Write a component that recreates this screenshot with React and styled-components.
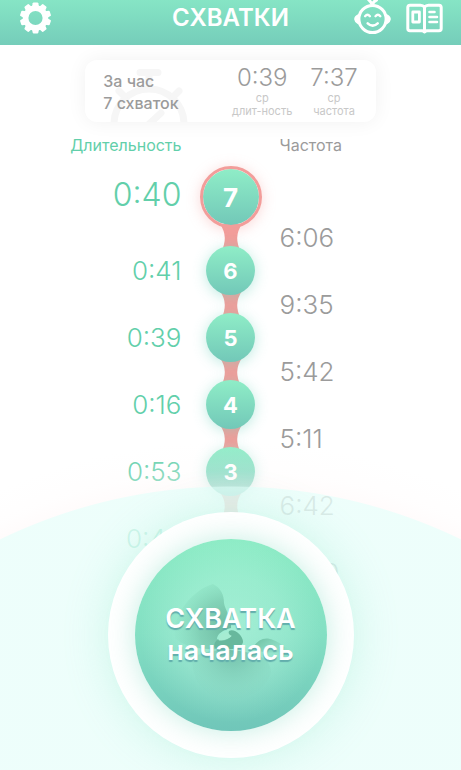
import styled, { createGlobalStyle } from "styled-components"

const GlobalStyle = createGlobalStyle`
  * {
    box-sizing: border-box;
  }
  body {
    margin: 0;
    background: #fff;
    font-family: Inter, "Liberation Sans", sans-serif;
  }
`
const Page = styled.div`
  position: relative;
  display: flex;
  flex-direction: column;

  height: 100vh;
  overflow: hidden;
`
const Header = styled.header`
  flex: none;
  display: grid;
  grid-template-columns: 1fr auto 1fr;
  align-items: center;

  padding: 0 17px 10px;
  background: linear-gradient(#86e5c5, #75cdba);

  h1 {
    margin: 0;
    color: #fff;
    font-size: 24px;
    font-weight: 600;
    line-height: 35px;
  }
`
const HeaderActions = styled.div`
  display: flex;
  justify-content: flex-end;
  gap: 14px;
`
const IconButton = styled.button`
  display: flex;
  justify-self: start;

  padding: 0;
  border: none;
  background: none;
  color: #fff;
  cursor: pointer;
`
const Summary = styled.section`
  position: relative;
  flex: none;
  align-self: center;
  display: flex;
  align-items: center;
  gap: 18px;

  width: 63%;
  min-width: 290px;
  height: 62px;
  margin-top: 15px;
  padding: 0 18px;
  overflow: hidden;

  border-radius: 12px;
  background: #fff;
  box-shadow: 0 0 20px rgba(0, 0, 0, 0.06);
`
const Watermark = styled.svg`
  position: absolute;
  top: 0;
  left: 22px;
`
const SummaryText = styled.p`
  position: relative;
  flex: 1;
  margin: 2px 0 0;

  color: #9b9b9b;
  font-size: 16px;
  font-weight: 500;
  line-height: 22px;
`
const Average = styled.div`
  display: flex;
  flex-direction: column;
  align-items: center;

  color: #c8c8c8;
  font-size: 11px;
  line-height: 13px;

  strong {
    color: #9b9b9b;
    font-size: 24px;
    font-weight: 300;
    line-height: 28px;
  }
`
const columns = `
  display: grid;
  grid-template-columns: 1fr 62px 1fr;
  column-gap: 18px;
`
const ListHead = styled.div`
  ${columns}
  flex: none;
  margin: 12px 0 10px;

  color: #9b9b9b;
  font-size: 16px;
  line-height: 22px;

  span:first-child {
    color: #62cfaa;
    text-align: right;
  }
  span:last-child {
    grid-column: 3;
  }
`
const List = styled.ol`
  flex: 1;
  min-height: 0;
  margin: 0;
  padding: 0;
  list-style: none;
`
const Row = styled.li`
  ${columns}
  grid-template-rows: 100%;
  height: ${({ $latest }) => ($latest ? "80px" : "67px")};
`
const Duration = styled.span`
  color: #62cfaa;
  text-align: right;
  font-size: ${({ $latest }) => ($latest ? "32px" : "26px")};
  font-weight: 300;
  line-height: ${({ $latest }) => ($latest ? "57px" : "49px")};
`
const Interval = styled.span`
  align-self: end;
  margin-bottom: -8px;

  color: #9b9b9b;
  font-size: 26px;
  font-weight: 300;
  line-height: 32px;
`
const Track = styled.div`
  display: flex;
  flex-direction: column;
  align-items: center;
`
const Bubble = styled.span`
  z-index: 1;
  flex: none;
  display: flex;
  align-items: center;
  justify-content: center;

  width: ${({ $latest }) => ($latest ? "62px" : "49px")};
  height: ${({ $latest }) => ($latest ? "62px" : "49px")};
  border: ${({ $latest }) => ($latest ? "3px solid #f29d9a" : "none")};
  border-radius: 50%;
  background: linear-gradient(#8fedc7, #72c8b8) padding-box;
  box-shadow: 0 2px 14px
    ${({ $latest }) =>
      $latest ? "rgba(242, 157, 154, 0.4)" : "rgba(114, 210, 190, 0.45)"};

  color: #fff;
  font-size: ${({ $latest }) => ($latest ? "26px" : "22px")};
  font-weight: 700;
`
const Connector = styled.svg`
  flex: none;
  margin-top: -4px;
`
const Dock = styled.div`
  position: absolute;
  z-index: 2;
  right: 0;
  bottom: 0;
  left: 0;
  display: flex;
  align-items: flex-end;
  justify-content: center;

  height: 353px;
  padding-bottom: 12px;
  background: radial-gradient(
    circle at 50% 598px,
    rgba(233, 254, 250, 0.8) 528px,
    rgba(255, 248, 248, 0.5) 529px,
    rgba(255, 250, 250, 0.25) 544px,
    rgba(255, 255, 255, 0) 574px
  );
  pointer-events: none;
`
const StartButton = styled.button`
  display: flex;
  align-items: center;
  justify-content: center;

  width: 246px;
  height: 246px;
  padding: 27px;
  border: none;
  border-radius: 50%;
  background: #fff;
  box-shadow: 0 0 44px rgba(130, 225, 195, 0.3);

  cursor: pointer;
  pointer-events: auto;
`
const StartFace = styled.span`
  display: grid;
  place-items: center;

  width: 100%;
  height: 100%;
  border-radius: 50%;
  background: radial-gradient(
      circle at 50% 48%,
      rgba(190, 250, 228, 0.55),
      rgba(190, 250, 228, 0.3) 40%,
      rgba(190, 250, 228, 0) 66%
    ),
    linear-gradient(#8eecc6, #83dfc3 50%, #70c6b9);
  box-shadow: 0 0 28px rgba(110, 215, 185, 0.4);

  > * {
    grid-area: 1 / 1;
  }
`
const StartLabel = styled.span`
  z-index: 1;

  color: #fff;
  font-family: Inter, "Liberation Sans", sans-serif;
  font-size: 27px;
  font-weight: 600;
  line-height: 32px;
  text-shadow: 0 2px 1px #62aeac;
`

const GearIcon = () => (
  <svg width='37' height='33' viewBox='0 0 37 33' aria-hidden='true'>
    <g transform='translate(18.5 17)' fill='currentColor'>
      {Array.from({ length: 10 }, (_, i) => (
        <path
          key={i}
          d='M-3.6 -11 L-2.8 -14.8 Q-2.6 -15.6 -1.8 -15.6 H1.8 Q2.6 -15.6 2.8 -14.8 L3.6 -11Z'
          transform={`rotate(${i * 36})`}
        />
      ))}
      <circle r='9.9' fill='none' stroke='currentColor' strokeWidth='5.6' />
    </g>
  </svg>
)

const BabyIcon = () => (
  <svg
    width='38'
    height='35'
    viewBox='0 0 38 35'
    fill='none'
    stroke='currentColor'
    strokeLinecap='round'
    aria-hidden='true'
  >
    <circle cx='18.5' cy='19' r='13.6' strokeWidth='3' />
    <path d='M4 15.5 Q1 17 1.2 19.5 Q1.5 22 4 23Z' fill='currentColor' strokeWidth='2' />
    <path d='M33 15.5 Q36 17 35.8 19.5 Q35.5 22 33 23Z' fill='currentColor' strokeWidth='2' />
    <path d='M18.5 5 Q17 2 14 -1 M18.5 5 Q19 1.5 22.5 0' strokeWidth='3' />
    <path d='M11.1 16.2 Q13.5 13.4 15.9 16.2 M21.5 16.2 Q23.9 13.4 26.3 16.2' strokeWidth='2.4' />
    <path d='M13.7 23.4 Q18.7 28 23.7 23.4' strokeWidth='2.6' />
  </svg>
)

const BookIcon = () => (
  <svg
    width='38'
    height='35'
    viewBox='0 0 38 35'
    fill='none'
    stroke='currentColor'
    strokeLinecap='round'
    strokeLinejoin='round'
    aria-hidden='true'
  >
    <path
      d='M18.5 7.2 Q17 5.2 14.5 5.2 H4 Q1.8 5.2 1.8 7.5 V28.5 Q1.8 30.8 4 30.8 H16.5 L18.5 32 L20.5 30.8 H33 Q35.2 30.8 35.2 28.5 V7.5 Q35.2 5.2 33 5.2 H22.5 Q20 5.2 18.5 7.2 V31'
      strokeWidth='3'
    />
    <rect x='6.8' y='12' width='6.6' height='10' strokeWidth='2.8' />
    <path d='M23.5 12 H28.5 M23.5 17 H31 M23.5 22 H31' strokeWidth='2.6' />
  </svg>
)

const Stopwatch = () => (
  <Watermark
    width='84'
    height='62'
    viewBox='0 0 84 62'
    fill='none'
    stroke='#f6f6f6'
    strokeLinecap='round'
    aria-hidden='true'
  >
    <circle cx='42' cy='64' r='35' strokeWidth='7' />
    <path d='M33 12.5 H51 M12 31 L17 36 M72 31 L67 36 M42 64 L54 53' strokeWidth='7' />
    <path d='M42 14 V28' strokeWidth='7' strokeLinecap='butt' />
  </Watermark>
)

const Fetus = () => (
  <svg width='191' height='191' viewBox='0 0 191 191' aria-hidden='true'>
    <defs>
      <radialGradient id='head' gradientUnits='userSpaceOnUse' cx='92' cy='88' r='56'>
        <stop offset='0' stopColor='#4f9c83' stopOpacity='0.65' />
        <stop offset='0.5' stopColor='#5bab90' stopOpacity='0.4' />
        <stop offset='1' stopColor='#6fc9a9' stopOpacity='0' />
      </radialGradient>
      <radialGradient id='body' gradientUnits='userSpaceOnUse' cx='98' cy='108' r='54'>
        <stop offset='0' stopColor='#4f9c88' stopOpacity='0.6' />
        <stop offset='1' stopColor='#7fcdb5' stopOpacity='0' />
      </radialGradient>
      <linearGradient id='foot' x1='0' y1='0.4' x2='1' y2='0.9'>
        <stop offset='0' stopColor='#62b597' stopOpacity='0.7' />
        <stop offset='1' stopColor='#7fcdb5' stopOpacity='0' />
      </linearGradient>
    </defs>
    <path
      d='M78 44 C86 48 89 55 89 63 C90 70 97 78 96 88 C88 90 82 94 82 99 C90 102 95 96 100 94 L108 101 C104 109 84 110 72 109 C56 108 46 104 40 98 C36 78 56 50 78 44Z'
      fill='url(#head)'
    />
    <path
      d='M57 118 C70 110 90 108 110 112 C124 114 136 120 136 132 C132 150 112 160 94 160 C72 158 57 144 57 118Z'
      fill='url(#body)'
    />
    <path d='M118 108 C122 100 130 96 138 100 C145 102 150 108 156 111 C142 113 126 114 118 108Z' fill='url(#foot)' />
    <path d='M84 101 C83 95 89 92 95 92 C99 95 97 99 84 101Z' fill='#a6ecd2' />
    <path
      d='M94 91 C99 88 108 95 108 102 C107 109 94 110 84 110 C78 109 78 104 82 100 C88 102 93 100 97 96 C94 95 93 93 94 91Z'
      fill='#68b89d'
    />
  </svg>
)

const contractions = [
  { number: 7, duration: "0:40", interval: "6:06" },
  { number: 6, duration: "0:41", interval: "9:35" },
  { number: 5, duration: "0:39", interval: "5:42" },
  { number: 4, duration: "0:16", interval: "5:11" },
  { number: 3, duration: "0:53", interval: "6:42" },
  { number: 2, duration: "0:43", interval: "10:10" },
]

const ContractionRow = ({ number, duration, interval, latest }) => (
  <Row $latest={latest}>
    <Duration $latest={latest}>{duration}</Duration>
    <Track>
      <Bubble $latest={latest}>{number}</Bubble>
      <Connector width='24' height='28' viewBox='0 0 24 28' aria-hidden='true'>
        <path d='M1 0 Q10 13 2 28 H22 Q14 13 23 0Z' fill='#f29d9a' />
        <path d='M6 4 H18 V24 H6Z' fill='#f29d9a' />
      </Connector>
    </Track>
    <Interval>{interval}</Interval>
  </Row>
)

export default function App() {
  return (
    <Page>
      <GlobalStyle />
      <Header>
        <IconButton aria-label='Настройки'>
          <GearIcon />
        </IconButton>
        <h1>СХВАТКИ</h1>
        <HeaderActions>
          <IconButton aria-label='Малыш'>
            <BabyIcon />
          </IconButton>
          <IconButton aria-label='Справка'>
            <BookIcon />
          </IconButton>
        </HeaderActions>
      </Header>

      <Summary>
        <Stopwatch />
        <SummaryText>
          За час
          <br />7 схваток
        </SummaryText>
        <Average>
          <strong>0:39</strong>
          <span>ср</span>
          <span>длит-ность</span>
        </Average>
        <Average>
          <strong>7:37</strong>
          <span>ср</span>
          <span>частота</span>
        </Average>
      </Summary>

      <ListHead>
        <span>Длительность</span>
        <span>Частота</span>
      </ListHead>
      <List>
        {contractions.map((item, index) => (
          <ContractionRow key={item.number} {...item} latest={index === 0} />
        ))}
      </List>

      <Dock>
        <StartButton>
          <StartFace>
            <Fetus />
            <StartLabel>
              СХВАТКА
              <br />
              началась
            </StartLabel>
          </StartFace>
        </StartButton>
      </Dock>
    </Page>
  )
}
